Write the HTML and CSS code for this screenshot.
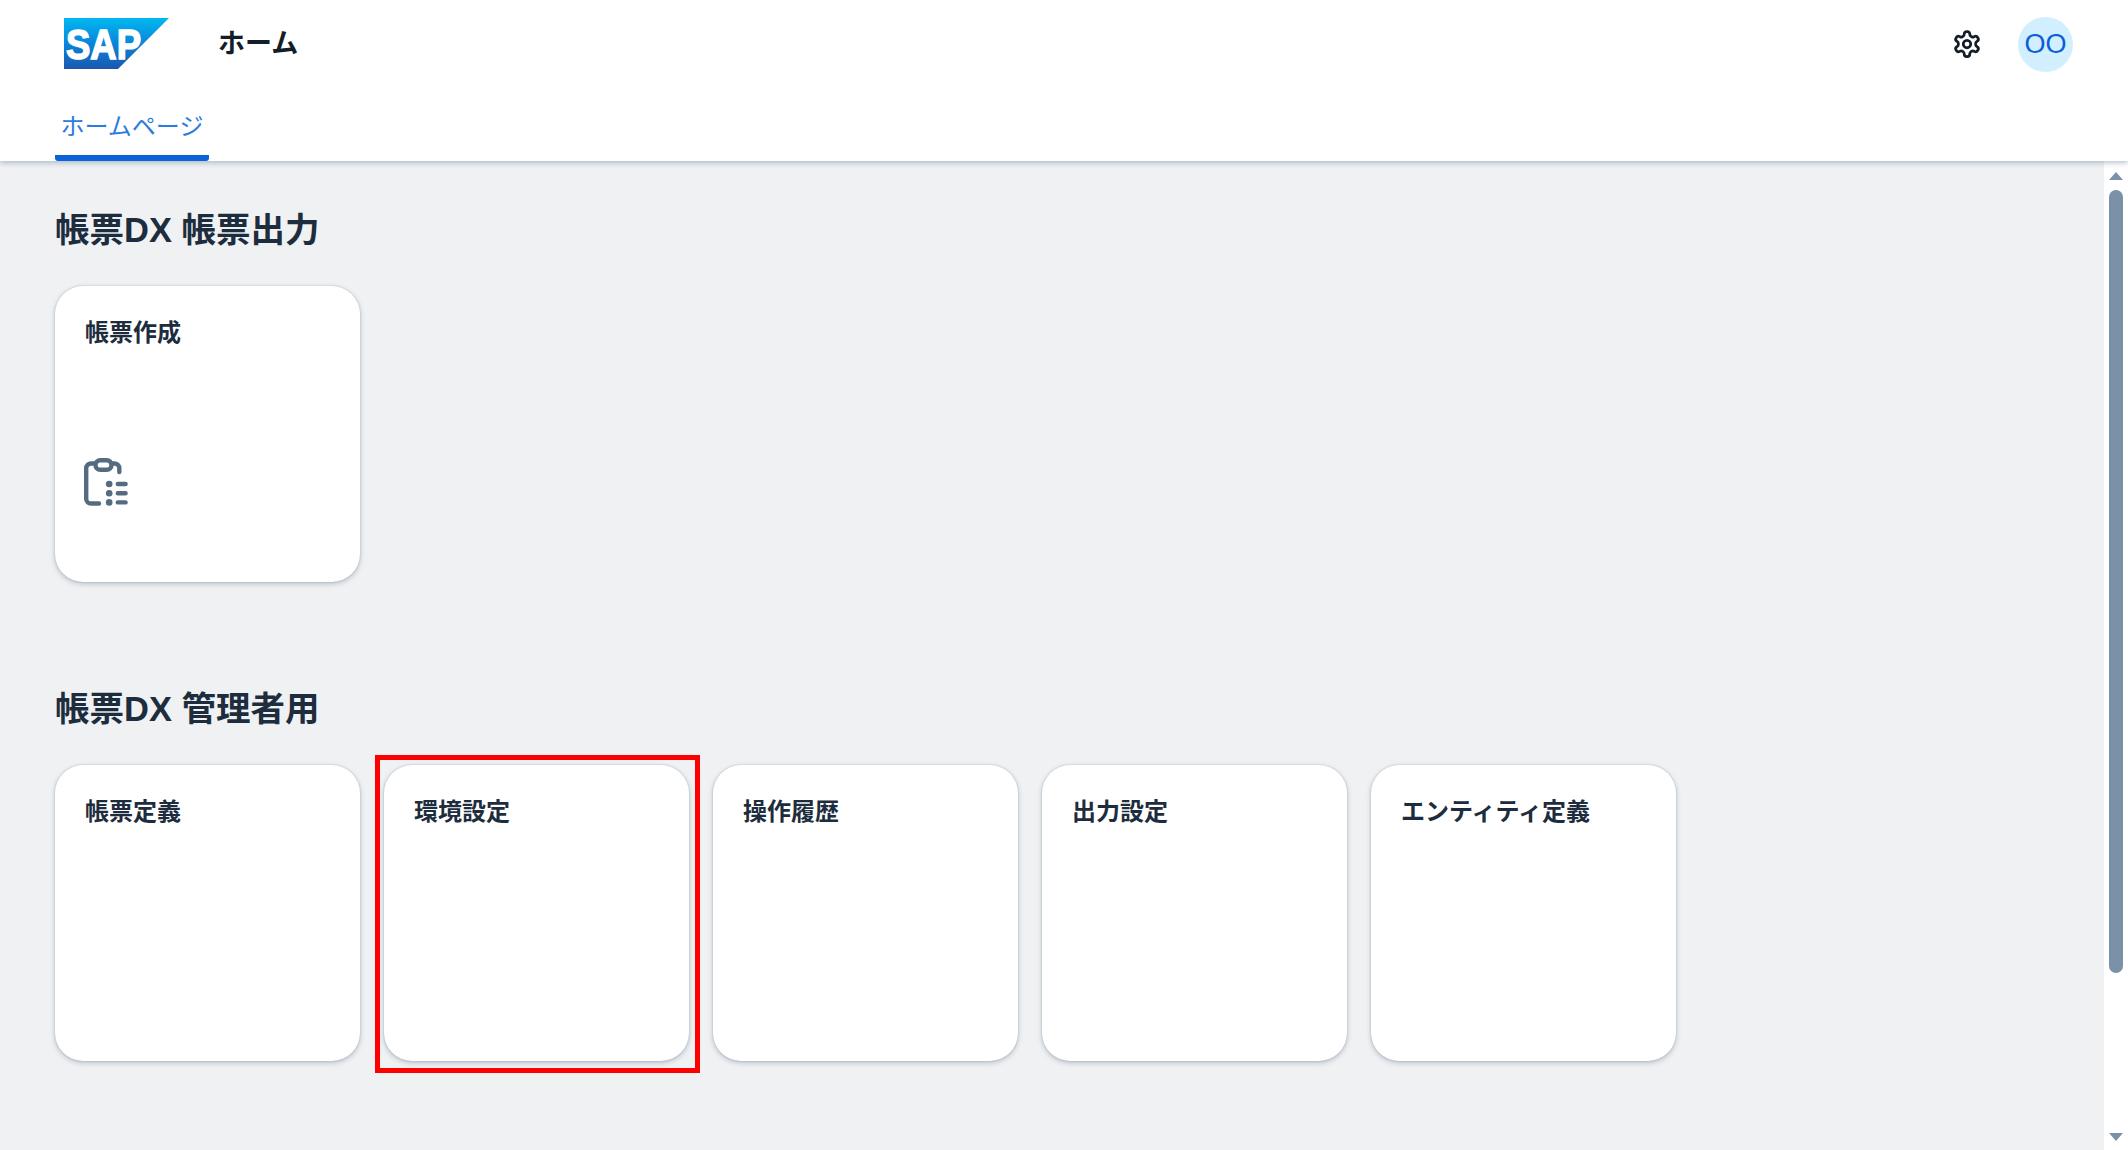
FILE: index.html
```html
<!DOCTYPE html>
<html lang="ja">
<head>
<meta charset="utf-8">
<title>ホーム</title>
<link rel="stylesheet" href="styles.css">
</head>
<body>
<header class="shell">
  <div class="shell-top">
    <svg class="logo" viewBox="0 0 105 51" aria-label="SAP">
      <defs>
        <linearGradient id="sapg" x1="0" y1="0" x2="0" y2="1">
          <stop offset="0" stop-color="#00b8f1"/>
          <stop offset="0.5" stop-color="#0a85d9"/>
          <stop offset="1" stop-color="#1c57b0"/>
        </linearGradient>
      </defs>
      <polygon points="0,0 105,0 54,51 0,51" fill="url(#sapg)"/>
      <text x="2" y="41" class="logo-text" textLength="75" lengthAdjust="spacingAndGlyphs">SAP</text>
    </svg>
    <h1 class="shell-title">ホーム</h1>
    <div class="shell-actions">
      <svg class="gear" viewBox="0 0 24 24" fill="none" stroke="#131e29" stroke-width="2.2" stroke-linecap="round" stroke-linejoin="round">
        <path d="M12.22 2h-.44a2 2 0 0 0-2 2v.18a2 2 0 0 1-1 1.73l-.43.25a2 2 0 0 1-2 0l-.15-.08a2 2 0 0 0-2.73.73l-.22.38a2 2 0 0 0 .73 2.73l.15.1a2 2 0 0 1 1 1.72v.51a2 2 0 0 1-1 1.74l-.15.09a2 2 0 0 0-.73 2.73l.22.38a2 2 0 0 0 2.73.73l.15-.08a2 2 0 0 1 2 0l.43.25a2 2 0 0 1 1 1.73V20a2 2 0 0 0 2 2h.44a2 2 0 0 0 2-2v-.18a2 2 0 0 1 1-1.73l.43-.25a2 2 0 0 1 2 0l.15.08a2 2 0 0 0 2.73-.73l.22-.39a2 2 0 0 0-.73-2.73l-.15-.08a2 2 0 0 1-1-1.74v-.5a2 2 0 0 1 1-1.74l.15-.09a2 2 0 0 0 .73-2.73l-.22-.38a2 2 0 0 0-2.73-.73l-.15.08a2 2 0 0 1-2 0l-.43-.25a2 2 0 0 1-1-1.73V4a2 2 0 0 0-2-2z"/>
        <circle cx="12" cy="12" r="3"/>
      </svg>
      <div class="avatar">OO</div>
    </div>
  </div>
  <nav class="tabs"><a class="tab">ホームページ</a></nav>
</header>
<div class="body-row">
  <main class="content">
    <section class="group">
      <h2 class="group-title">帳票DX 帳票出力</h2>
      <div class="cards">
        <div class="card">
          <div class="card-title">帳票作成</div>
          <svg class="card-icon" viewBox="0 0 44 48" fill="none" stroke="#556b82" stroke-width="4.4" stroke-linecap="round" stroke-linejoin="round">
            <path d="M11 5.5H7a4.8 4.8 0 0 0-4.8 4.8v30.4A4.8 4.8 0 0 0 7 45.5h8"/>
            <path d="M28 5.5h2.5a4.8 4.8 0 0 1 4.8 4.8v3.7"/>
            <rect x="11.5" y="2.2" width="16" height="9.6" rx="4.8"/>
            <path d="M33.8 26h7.8M33.8 35.2h7.8M33.8 44.4h7.8"/>
            <g fill="#556b82" stroke="none">
              <circle cx="25.2" cy="26" r="3.3"/><circle cx="25.2" cy="35.2" r="3.3"/><circle cx="25.2" cy="44.4" r="3.3"/>
            </g>
          </svg>
        </div>
      </div>
    </section>
    <section class="group">
      <h2 class="group-title">帳票DX 管理者用</h2>
      <div class="cards">
        <div class="card"><div class="card-title">帳票定義</div></div>
        <div class="card highlighted"><div class="card-title">環境設定</div></div>
        <div class="card"><div class="card-title">操作履歴</div></div>
        <div class="card"><div class="card-title">出力設定</div></div>
        <div class="card"><div class="card-title">エンティティ定義</div></div>
      </div>
    </section>
  </main>
  <aside class="scrollbar">
    <span class="arrow-up"></span>
    <div class="track"><div class="thumb"></div></div>
    <span class="arrow-down"></span>
  </aside>
</div>
</body>
</html>
```

FILE: styles.css
```css
* { box-sizing: border-box; }
html, body { margin: 0; height: 100%; overflow: hidden; }
body {
  display: flex;
  flex-direction: column;
  background: #fff;
  font-family: "Liberation Sans", "Noto Sans CJK JP", sans-serif;
  color: #131e29;
}
.shell {
  position: relative;
  z-index: 2;
  height: 161px;
  flex: none;
  background: #fff;
  box-shadow: 0 2px 5px rgba(85, 107, 130, 0.4);
}
.shell-top {
  height: 88px;
  display: flex;
  align-items: center;
  padding: 0 55px 0 64px;
}
.logo { width: 105px; height: 51px; flex: none; margin-top: -2px; }
.logo-text {
  font-family: "Liberation Sans", sans-serif;
  font-size: 43px;
  font-weight: 700;
  fill: #fff;
  stroke: #fff;
  stroke-width: 1.6px;
}
.shell-title {
  margin: 0 0 0 49px;
  font-size: 27px;
  font-weight: 700;
  line-height: 1;
  color: #131e29;
}
.shell-actions {
  margin-left: auto;
  display: flex;
  align-items: center;
  gap: 36px;
}
.gear { width: 30px; height: 30px; }
.avatar {
  width: 55px;
  height: 55px;
  border-radius: 50%;
  background: #d1efff;
  color: #0a5ed6;
  font-size: 27px;
  display: flex;
  align-items: center;
  justify-content: center;
}
.tabs { height: 73px; display: flex; padding-left: 55px; }
.tab {
  width: 154px;
  height: 73px;
  display: flex;
  justify-content: center;
  padding-top: 21px;
  font-size: 24px;
  line-height: 36px;
  color: #2b7ce0;
  border-bottom: 6px solid #0a64d8;
  border-radius: 0 0 3px 3px;
}
.body-row { flex: 1; display: flex; min-height: 0; }
.content {
  flex: 1;
  background: #eff1f3;
  padding: 45px 0 0 55px;
  overflow: hidden;
}
.group { margin-bottom: 103px; }
.group-title {
  margin: 0 0 32px;
  font-size: 34.5px;
  line-height: 48px;
  font-weight: 700;
  color: #1d2d3e;
}
.cards { display: flex; gap: 24px; }
.card {
  position: relative;
  width: 305px;
  height: 296px;
  background: #fff;
  border-radius: 28px;
  box-shadow: 0 0 2px rgba(85, 107, 130, 0.35), 0 2px 5px rgba(85, 107, 130, 0.35);
  padding: 29px 30px;
  display: flex;
  flex-direction: column;
}
.card-title {
  font-size: 24px;
  line-height: 36px;
  font-weight: 700;
  color: #1d2d3e;
}
.card-icon { width: 44px; height: 48px; margin-top: 107px; margin-left: -1px; }
.highlighted::after {
  content: "";
  position: absolute;
  inset: -10px -11px -12px -9px;
  border: 5px solid #ff0000;
}
.scrollbar {
  width: 24px;
  flex: none;
  display: flex;
  flex-direction: column;
  align-items: center;
  padding: 11px 0 9px;
  background: #fff;
}
.arrow-up, .arrow-down {
  width: 0;
  height: 0;
  flex: none;
  border-left: 7px solid transparent;
  border-right: 7px solid transparent;
}
.arrow-up { border-bottom: 8px solid #7b91a8; }
.arrow-down { border-top: 8px solid #7b91a8; }
.track { flex: 1; width: 100%; padding-top: 10px; display: flex; justify-content: center; }
.thumb { width: 14px; height: 783px; border-radius: 7px; background: #7b91a8; }
```
